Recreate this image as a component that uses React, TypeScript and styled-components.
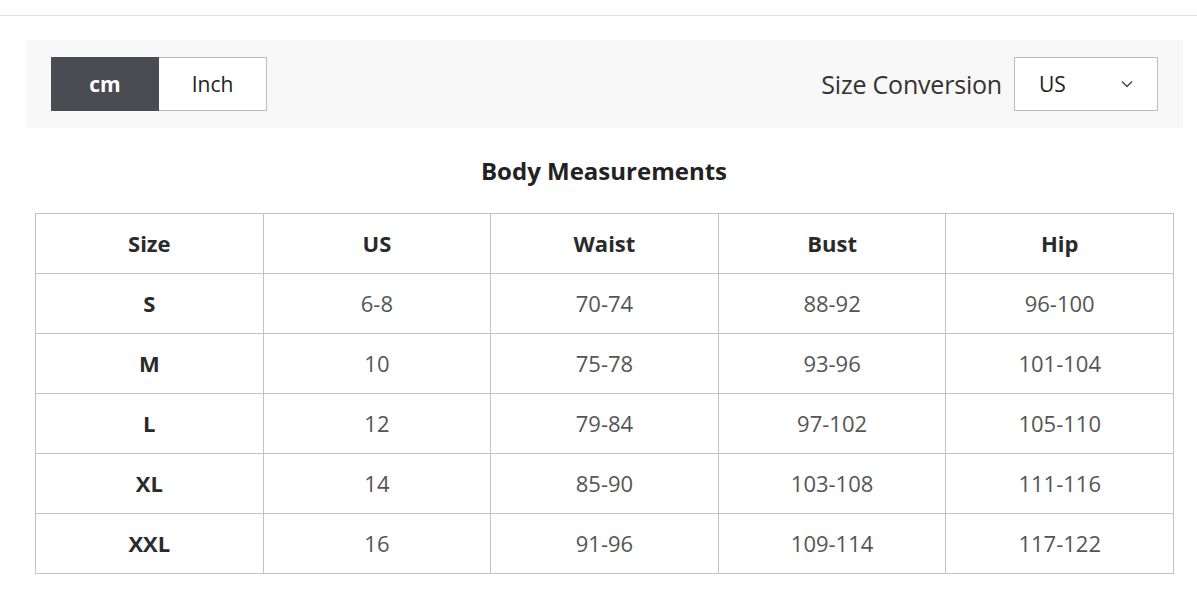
import React from "react";
import styled, { createGlobalStyle } from "styled-components";

const Global = createGlobalStyle`
  html, body { margin: 0; padding: 0; background: #fff; }
  body { font-family: "Open Sans", "Noto Sans", sans-serif; color: #333; }
`;

const Page = styled.div`
  width: 1197px;
  height: 594px;
  overflow: hidden;
`;

const TopRule = styled.div`
  height: 15px;
  border-bottom: 1px solid #dedede;
`;

const Toolbar = styled.div`
  margin: 24px 14px 0 26px;
  height: 88px;
  padding: 0 25px 0 25px;
  box-sizing: border-box;
  background: #f8f8f8;
  display: flex;
  align-items: center;
  justify-content: space-between;
`;

const Toggle = styled.div`
  display: flex;
  height: 54px;
`;

const UnitButton = styled.button<{ $active?: boolean }>`
  width: 108px;
  height: 54px;
  box-sizing: border-box;
  border: 1px solid ${(p) => (p.$active ? "#4a4c52" : "#bcbcbc")};
  ${(p) => (p.$active ? "" : "border-left: none;")}
  background: ${(p) => (p.$active ? "#4a4c52" : "#fff")};
  color: ${(p) => (p.$active ? "#fff" : "#222")};
  font-family: "Open Sans", "Noto Sans", sans-serif;
  font-size: 21px;
  font-weight: ${(p) => (p.$active ? 700 : 400)};
  padding: 0;
  cursor: pointer;
`;

const ConvGroup = styled.div`
  display: flex;
  align-items: center;
  gap: 12px;
`;

const ConvLabel = styled.span`
  font-size: 25px;
  color: #333;
  letter-spacing: -0.2px;
`;

const Select = styled.div`
  width: 144px;
  height: 54px;
  box-sizing: border-box;
  border: 1px solid #bcbcbc;
  background: #fff;
  display: flex;
  align-items: center;
  justify-content: space-between;
  padding: 0 24px 0 24px;
  font-size: 21px;
  color: #222;
`;

const Title = styled.h2`
  margin: 0;
  padding: 27px 0 0;
  margin-left: 35px;
  width: 1138px;
  text-align: center;
  font-size: 24px;
  font-weight: 700;
  color: #222;
  line-height: 32px;
`;

const Table = styled.table`
  margin: 26px 0 0 35px;
  width: 1139px;
  border-collapse: collapse;
  table-layout: fixed;
`;

const Cell = styled.td<{ $strong?: boolean }>`
  height: 57px;
  padding: 0 0 2px;
  border: 1px solid #c2c2c2;
  text-align: center;
  vertical-align: middle;
  font-size: 22px;
  font-weight: ${(p) => (p.$strong ? 700 : 400)};
  color: ${(p) => (p.$strong ? "#2a2a2a" : "#555")};
`;

const Chevron = () => (
  <svg width="12" height="8" viewBox="0 0 12 8" fill="none">
    <path d="M1 1.5 L6 6.5 L11 1.5" stroke="#444" strokeWidth="1.4" />
  </svg>
);

const headers = ["Size", "US", "Waist", "Bust", "Hip"];
const rows = [
  ["S", "6-8", "70-74", "88-92", "96-100"],
  ["M", "10", "75-78", "93-96", "101-104"],
  ["L", "12", "79-84", "97-102", "105-110"],
  ["XL", "14", "85-90", "103-108", "111-116"],
  ["XXL", "16", "91-96", "109-114", "117-122"],
];

export default function App() {
  return (
    <Page>
      <Global />
      <TopRule />
      <Toolbar>
        <Toggle>
          <UnitButton $active>cm</UnitButton>
          <UnitButton>Inch</UnitButton>
        </Toggle>
        <ConvGroup>
          <ConvLabel>Size Conversion</ConvLabel>
          <Select>
            <span>US</span>
            <Chevron />
          </Select>
        </ConvGroup>
      </Toolbar>
      <Title>Body Measurements</Title>
      <Table>
        <thead>
          <tr>
            {headers.map((h) => (
              <Cell as="th" key={h} $strong>
                {h}
              </Cell>
            ))}
          </tr>
        </thead>
        <tbody>
          {rows.map((r) => (
            <tr key={r[0]}>
              {r.map((v, i) => (
                <Cell key={i} $strong={i === 0}>
                  {v}
                </Cell>
              ))}
            </tr>
          ))}
        </tbody>
      </Table>
    </Page>
  );
}
